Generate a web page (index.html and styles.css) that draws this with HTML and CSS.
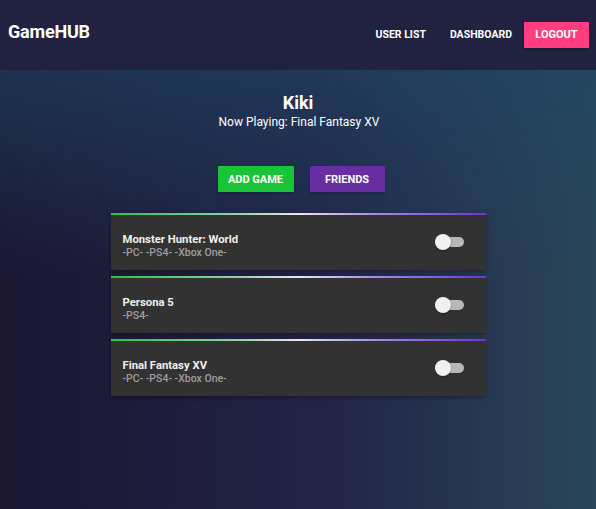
FILE: index.html
```html
<!DOCTYPE html>
<html>
<head>
<meta charset="utf-8">
<link rel="stylesheet" href="styles.css">
</head>
<body>
<nav class="navbar">
  <a class="brand">GameHUB</a>
  <ul class="nav-links">
    <li><a>USER LIST</a></li>
    <li><a>DASHBOARD</a></li>
    <li><a class="btn-logout">LOGOUT</a></li>
  </ul>
</nav>
<main class="content">
  <h1 class="user-name">Kiki</h1>
  <p class="now-playing">Now Playing: Final Fantasy XV</p>
  <div class="actions">
    <a class="btn btn-green">ADD GAME</a>
    <a class="btn btn-purple">FRIENDS</a>
  </div>
  <ul class="games">
    <li class="game">
      <div class="game-info">
        <div class="game-title">Monster Hunter: World</div>
        <div class="game-platforms">-PC- -PS4- -Xbox One-</div>
      </div>
      <span class="switch"><span class="knob"></span></span>
    </li>
    <li class="game">
      <div class="game-info">
        <div class="game-title">Persona 5</div>
        <div class="game-platforms">-PS4-</div>
      </div>
      <span class="switch"><span class="knob"></span></span>
    </li>
    <li class="game">
      <div class="game-info">
        <div class="game-title">Final Fantasy XV</div>
        <div class="game-platforms">-PC- -PS4- -Xbox One-</div>
      </div>
      <span class="switch"><span class="knob"></span></span>
    </li>
  </ul>
</main>
</body>
</html>
```

FILE: styles.css
```css
* { box-sizing: border-box; }
html, body { margin: 0; padding: 0; height: 100%; }
body {
  font-family: Roboto, "Liberation Sans", sans-serif;
  color: #fff;
  background:
    linear-gradient(to bottom, rgba(31, 72, 104, 0.75) 0%, rgba(31, 72, 104, 0) 55%),
    linear-gradient(to right, #1a1630 0%, #222447 55%, #2a4658 100%);
  min-height: 509px;
}
.navbar {
  height: 70px;
  background: #20223f;
  display: flex;
  align-items: center;
  justify-content: space-between;
  padding: 0 7px 0 8px;
}
.brand {
  font-size: 18px;
  font-weight: 700;
  letter-spacing: -0.2px;
  margin-top: -7px;
}
.nav-links {
  list-style: none;
  margin: 0;
  padding: 0;
  display: flex;
  align-items: center;
}
.nav-links a {
  display: block;
  font-size: 10.5px;
  font-weight: 700;
  padding: 0 12px;
  line-height: 26px;
}
.btn-logout {
  background: #ff3d7f;
  box-shadow: 0 2px 2px rgba(0,0,0,0.25);
  width: 65px;
  text-align: center;
  padding: 0 !important;
  font-size: 11px !important;
}
.content {
  display: flex;
  flex-direction: column;
  align-items: center;
  padding-top: 22px;
  padding-left: 6px;
}
.user-name {
  margin: 0 0 0 -6px;
  font-size: 18px;
  font-weight: 700;
  line-height: 22px;
}
.now-playing {
  margin: 0 0 0 -4px;
  font-size: 12px;
  line-height: 16px;
}
.actions {
  display: flex;
  gap: 16px;
  margin-top: 36px;
}
.btn {
  display: block;
  height: 26px;
  line-height: 27px;
  font-size: 11px;
  font-weight: 700;
  text-align: center;
  box-shadow: 0 2px 2px rgba(0,0,0,0.2);
  border-radius: 1px;
}
.btn-green { background: #19c437; width: 76px; }
.btn-purple { background: #662ea0; width: 75px; }
.games {
  list-style: none;
  margin: 21px 0 0 -6px;
  padding: 0;
  width: 375px;
  display: flex;
  flex-direction: column;
  gap: 6px;
}
.game {
  height: 57px;
  background: #323232;
  border-top: 2px solid transparent;
  border-image: linear-gradient(90deg, #20c64a 0%, #9ad2a8 35%, #e6e6f0 50%, #a48ee0 70%, #6a35d0 100%) 1;
  border-bottom: 0; border-left: 0; border-right: 0;
  box-shadow: 0 2px 4px rgba(0,0,0,0.3);
  display: flex;
  align-items: center;
  justify-content: space-between;
  padding: 6px 22px 0 12px;
}
.game-title {
  font-size: 11.3px;
  font-weight: 700;
  color: #f0f0f0;
  line-height: 13px;
}
.game-platforms {
  font-size: 10.5px;
  font-weight: 500;
  color: #9d9d9d;
  line-height: 13px;
}
.switch {
  position: relative;
  width: 29px;
  height: 10px;
  background: #b8b8b8;
  border-radius: 5px;
  margin-top: -8px;
}
.knob {
  position: absolute;
  left: 0;
  top: -3px;
  width: 16px;
  height: 16px;
  border-radius: 50%;
  background: #f1f1f1;
  box-shadow: 0 1px 2px rgba(0,0,0,0.4);
}
```
